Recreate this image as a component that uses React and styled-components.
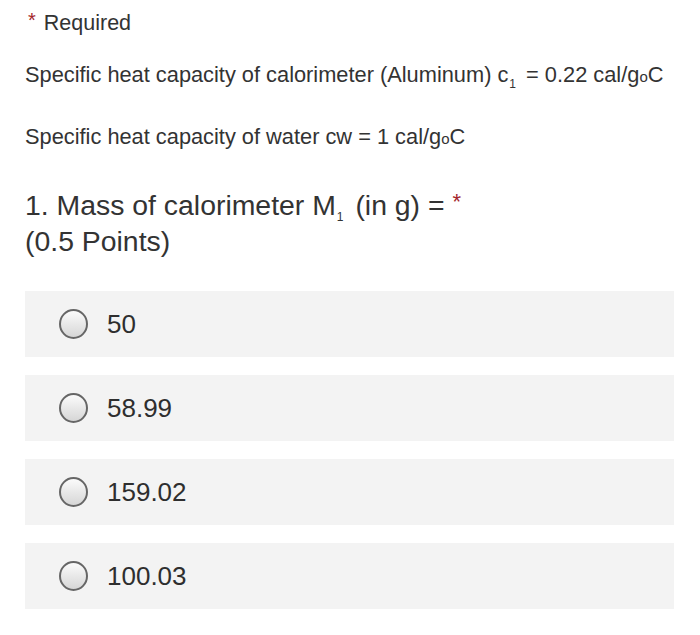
import React from 'react';
import styled, { createGlobalStyle } from 'styled-components';

const GlobalStyle = createGlobalStyle`
  body {
    margin: 0;
    background: #ffffff;
    font-family: "Liberation Sans", Arial, sans-serif;
    color: #333333;
  }
`;

const Page = styled.div`
  width: 700px;
  padding: 10px 26px 0 25px;
  box-sizing: border-box;
`;

const RequiredNote = styled.div`
  display: flex;
  align-items: flex-start;
  font-size: 21.5px;
  line-height: 26px;
  margin-left: 3px;
`;

const Star = styled.span`
  color: #a4262c;
  font-size: ${(p) => p.size || 20}px;
  margin-right: ${(p) => p.gap || 8}px;
  line-height: 1;
  vertical-align: ${(p) => p.lift || 0}px;
`;

const Info = styled.p`
  font-size: 21.8px;
  margin: ${(p) => p.top}px 0 0 0;
  line-height: 26px;
`;

const Sub = styled.sub`
  font-size: 12px;
  line-height: 0;
  vertical-align: -6px;
  margin: 0 4px 0 1px;
`;

const Deg = styled.span`
  font-size: 15px;
`;

const Question = styled.div`
  margin-top: 35px;
  font-size: 28.4px;
  line-height: 36px;
`;

const Options = styled.div`
  display: flex;
  flex-direction: column;
  gap: 18px;
  margin-top: 32px;
`;

const Option = styled.label`
  display: flex;
  align-items: center;
  height: 66px;
  background: #f3f3f3;
  padding-left: 34px;
  font-size: 26px;
  color: #2e2e2e;
`;

const Radio = styled.span`
  width: 29px;
  height: 30px;
  border-radius: 50%;
  border: 2px solid #666666;
  background: linear-gradient(#fbfbfb, #d6d6d6);
  box-sizing: border-box;
  margin-right: 19px;
`;

const options = ['50', '58.99', '159.02', '100.03'];

export default function App() {
  return (
    <>
      <GlobalStyle />
      <Page>
        <RequiredNote>
          <Star>*</Star>
          Required
        </RequiredNote>
        <Info top={26}>
          Specific heat capacity of calorimeter (Aluminum) c<Sub>1</Sub> = 0.22 cal/g<Deg>o</Deg>C
        </Info>
        <Info top={34}>
          Specific heat capacity of water cw = 1 cal/g<Deg>o</Deg>C
        </Info>
        <Question>
          1. Mass of calorimeter M<Sub>1</Sub> (in g) = <Star size={22} gap={0} lift={6}>*</Star>
          <br />
          (0.5 Points)
        </Question>
        <Options>
          {options.map((o) => (
            <Option key={o}>
              <Radio />
              {o}
            </Option>
          ))}
        </Options>
      </Page>
    </>
  );
}
